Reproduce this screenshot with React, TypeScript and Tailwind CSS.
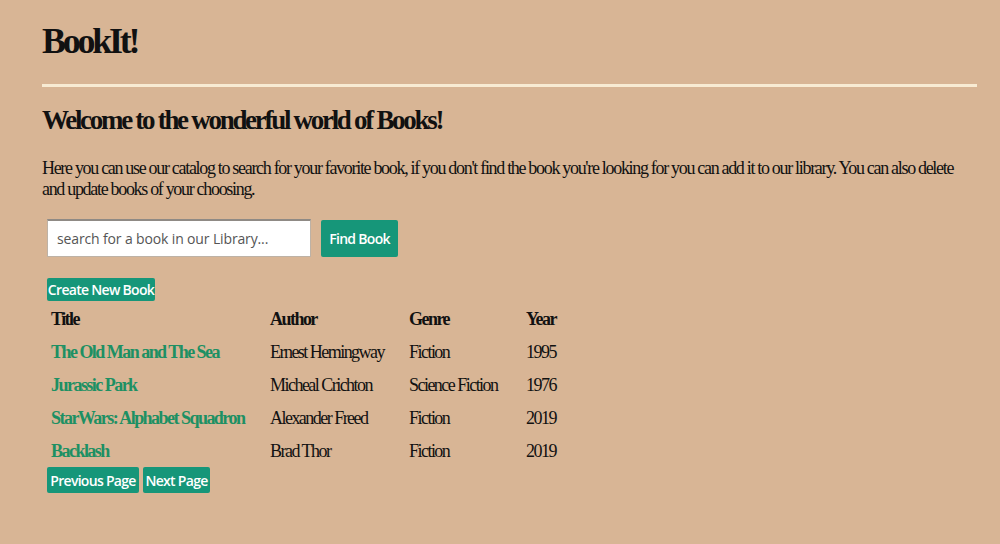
const books = [
  { title: "The Old Man and The Sea", author: "Ernest Hemingway", genre: "Fiction", year: 1995 },
  { title: "Jurassic Park", author: "Micheal Crichton", genre: "Science Fiction", year: 1976 },
  { title: "StarWars: Alphabet Squadron", author: "Alexander Freed", genre: "Fiction", year: 2019 },
  { title: "Backlash", author: "Brad Thor", genre: "Fiction", year: 2019 },
];

const serif = "font-['Liberation_Serif','Times_New_Roman',serif]";
const sans = "font-['Open_Sans','DejaVu_Sans',sans-serif]";

function GreenButton({ children, className = "" }: { children: React.ReactNode; className?: string }) {
  return (
    <button className={`${sans} whitespace-nowrap rounded-[2px] bg-[#169679] text-[14px] font-semibold tracking-[-0.05em] text-white ${className}`}>
      {children}
    </button>
  );
}

export default function App() {
  return (
    <main className={`${serif} min-h-[544px] w-full bg-[#d8b595] pl-[42px] pr-[23px] pt-[20px] text-[#111]`}>
      <h1 className="text-[36px] font-bold leading-[42px] tracking-[-0.09em]">BookIt!</h1>
      <hr className="mt-[22px] h-[3px] border-0 bg-[#f8ebd3]" />
      <h2 className="mt-[18px] text-[27px] font-bold leading-[31px] tracking-[-0.085em]">
        Welcome to the wonderful world of Books!
      </h2>
      <p className="mt-[22px] w-[930px] text-[18px] leading-[21px] tracking-[-0.073em]">
        Here you can use our catalog to search for your favorite book, if you don't find the book you're looking for you can add it to our library. You can also delete and update books of your choosing.
      </p>

      <div className="mt-[19px] flex items-center gap-[10px] pl-[5px]">
        <input
          placeholder="search for a book in our Library..."
          className={`${sans} h-[38px] w-[264px] border border-t-2 border-[#bdb2a6] border-t-[#8f8a85] bg-white px-[9px] text-[14px] tracking-[-0.01em] text-[#333] placeholder:text-[#555] outline-none`}
        />
        <GreenButton className="h-[37px] w-[77px]">Find Book</GreenButton>
      </div>

      <div className="mt-[21px] pl-[5px]">
        <GreenButton className="h-[23px] w-[108px]">Create New Book</GreenButton>
      </div>

      <table className="ml-[5px] border-separate border-spacing-0 text-[18px] tracking-[-0.085em]">
        <thead>
          <tr className="h-[34px] text-left font-bold">
            <th className="w-[223px] pl-[4px] align-middle">Title</th>
            <th className="w-[139px] align-middle">Author</th>
            <th className="w-[117px] align-middle">Genre</th>
            <th className="align-middle">Year</th>
          </tr>
        </thead>
        <tbody>
          {books.map((b) => (
            <tr key={b.title} className="h-[33px]">
              <td className="pl-[4px] font-bold text-[#1d9063]">{b.title}</td>
              <td>{b.author}</td>
              <td>{b.genre}</td>
              <td>{b.year}</td>
            </tr>
          ))}
        </tbody>
      </table>

      <div className="mt-[-1px] flex gap-[4px] pl-[5px]">
        <GreenButton className="h-[26px] w-[92px]">Previous Page</GreenButton>
        <GreenButton className="h-[26px] w-[67px]">Next Page</GreenButton>
      </div>
    </main>
  );
}
